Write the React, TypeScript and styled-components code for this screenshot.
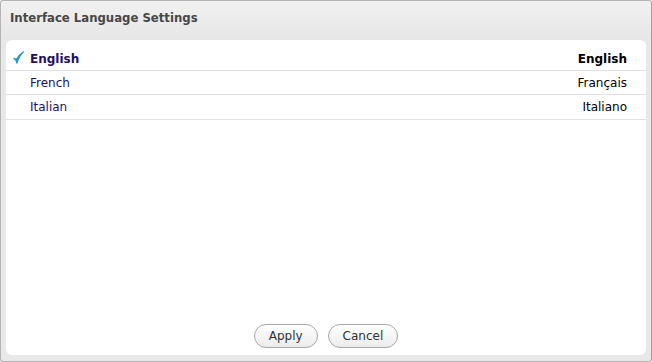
import styled, { createGlobalStyle } from "styled-components";

type Language = {
  name: string;
  native: string;
  selected?: boolean;
};

const languages: Language[] = [
  { name: "English", native: "English", selected: true },
  { name: "French", native: "Français" },
  { name: "Italian", native: "Italiano" },
];

const CheckIcon = () => (
  <svg width="11" height="13" viewBox="0 0 11 13">
    <path
      d="M0.8 7.4 L3 9.3 L3.8 12.2 Q6 5 10.4 0.8 Q5.6 4.2 3.4 8.6 Z"
      fill="#2597c6"
      stroke="#2597c6"
      strokeWidth="1.2"
      strokeLinejoin="round"
    />
  </svg>
);

const App = () => {
  return (
    <>
      <GlobalStyle />
      <Window>
        <Header>
          <Title>Interface Language Settings</Title>
        </Header>
        <Panel>
          <List>
            {languages.map((lang) => (
              <Row key={lang.name} $selected={lang.selected}>
                <Check>{lang.selected && <CheckIcon />}</Check>
                <Name>{lang.name}</Name>
                <Native>{lang.native}</Native>
              </Row>
            ))}
          </List>
          <Footer>
            <Button>Apply</Button>
            <Button>Cancel</Button>
          </Footer>
        </Panel>
      </Window>
    </>
  );
};

export default App;

const GlobalStyle = createGlobalStyle`
  html, body {
    margin: 0;
    padding: 0;
    background: #ffffff;
  }
  body {
    font-family: "DejaVu Sans", Verdana, sans-serif;
  }
`;

const Window = styled.div`
  box-sizing: border-box;
  width: 652px;
  height: 362px;
  display: flex;
  flex-direction: column;
  background: #e8e8e8;
  border: 1px solid #b4b4b4;
  border-right-color: #a0a0a0;
  border-radius: 3px;
  padding: 0 5px 6px 5px;
`;

const Header = styled.div`
  height: 39px;
  flex: none;
  display: flex;
  align-items: center;
  margin: 0 -5px;
  padding-left: 9px;
  background: linear-gradient(#f1f1f1, #e6e6e6);
  border-radius: 3px 3px 0 0;
`;

const Title = styled.h1`
  margin: 0;
  margin-top: -6px;
  font-size: 11.7px;
  font-weight: bold;
  color: #474747;
`;

const Panel = styled.div`
  flex: 1;
  display: flex;
  flex-direction: column;
  background: #ffffff;
  border-radius: 6px;
  padding-top: 7px;
`;

const List = styled.div`
  flex: 1;
  display: flex;
  flex-direction: column;
`;

const Row = styled.div<{ $selected?: boolean }>`
  display: flex;
  align-items: center;
  height: 23px;
  border-bottom: 1px solid #e3e3e3;
  padding: 0 19px 0 7px;
  font-size: 12px;
  font-weight: ${(p) => (p.$selected ? "bold" : "normal")};

  &:last-child {
    height: 24px;
  }
`;

const Check = styled.span`
  width: 17px;
  flex: none;
  display: flex;
  align-items: center;
  margin-top: -2px;
`;

const Name = styled.span`
  flex: 1;
  color: #23105f;
`;

const Native = styled.span`
  color: #000000;
`;

const Footer = styled.div`
  display: flex;
  justify-content: center;
  gap: 10px;
  padding: 0 0 7px 0;
`;

const Button = styled.button`
  height: 24px;
  min-width: 63px;
  padding: 0 14px;
  font-family: "DejaVu Sans", Verdana, sans-serif;
  font-size: 12px;
  color: #333333;
  background: linear-gradient(#ffffff, #ececec);
  border: 1px solid #a8a8a8;
  border-radius: 12px;
`;
